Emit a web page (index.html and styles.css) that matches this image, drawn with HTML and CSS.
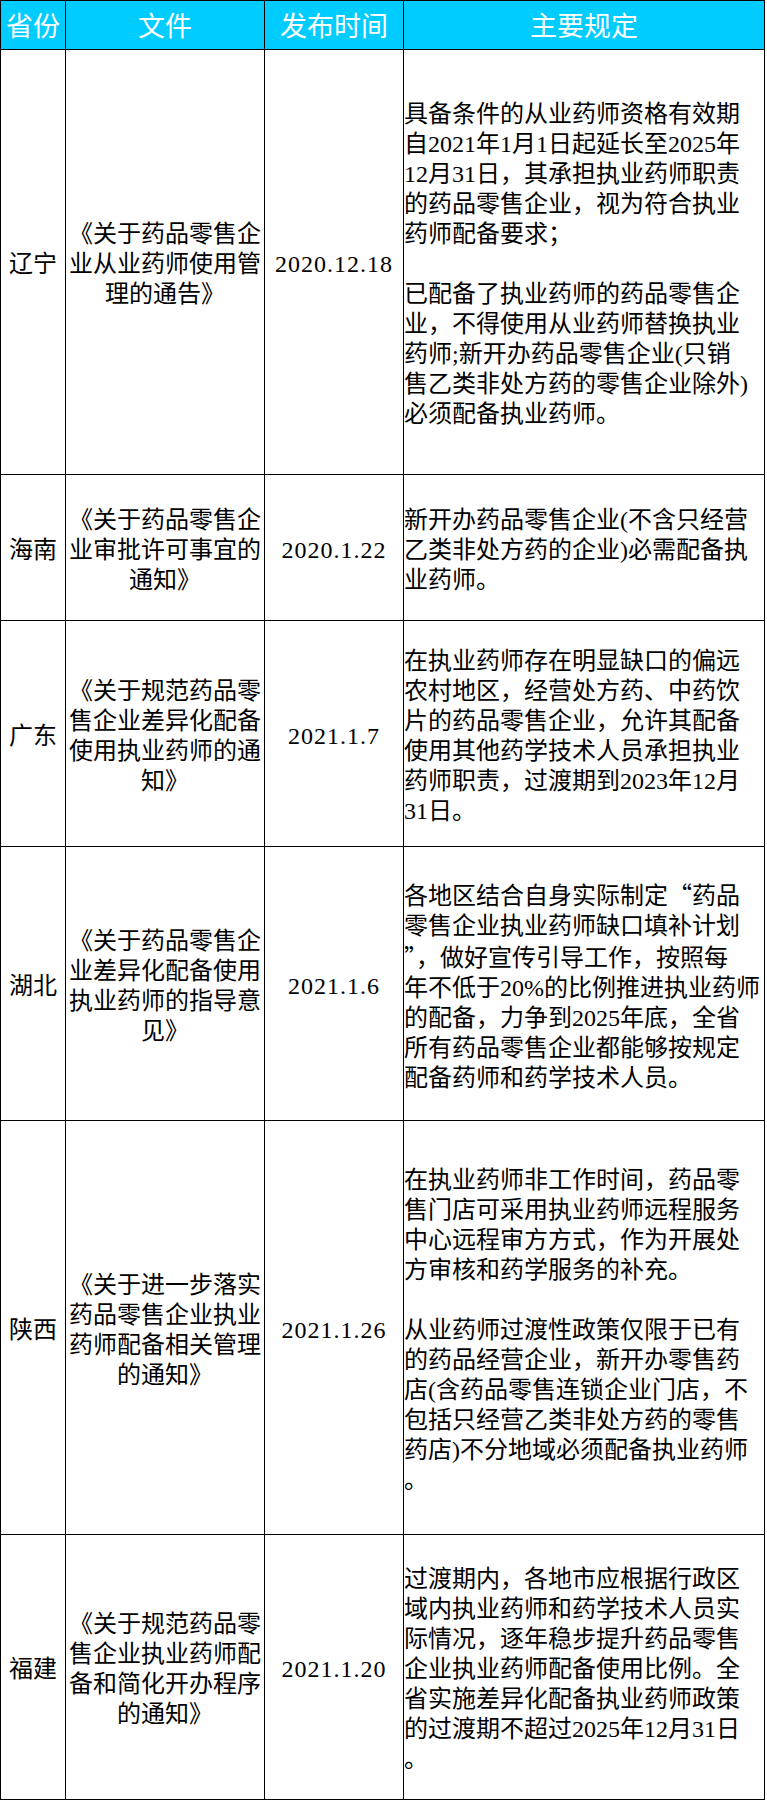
FILE: index.html
```html
<!DOCTYPE html>
<html lang="zh-CN">
<head>
<meta charset="utf-8">
<title>各省执业药师配备政策</title>
<link rel="stylesheet" href="styles.css">
</head>
<body>
<table class="policy">
  <colgroup>
    <col class="c-prov">
    <col class="c-doc">
    <col class="c-date">
    <col class="c-rule">
  </colgroup>
  <thead>
    <tr class="row-head">
      <th>省份</th>
      <th>文件</th>
      <th>发布时间</th>
      <th>主要规定</th>
    </tr>
  </thead>
  <tbody>
    <tr class="row-ln">
      <td class="prov">辽宁</td>
      <td class="doc">《关于药品零售企<br>业从业药师使用管<br>理的通告》</td>
      <td class="date">2020.12.18</td>
      <td class="rule rule-trail">
        <p>具备条件的从业药师资格有效期<br>自2021年1月1日起延长至2025年<br>12月31日，其承担执业药师职责<br>的药品零售企业，视为符合执业<br>药师配备要求；</p>
        <p>已配备了执业药师的药品零售企<br>业，不得使用从业药师替换执业<br>药师;新开办药品零售企业(只销<br>售乙类非处方药的零售企业除外)<br>必须配备执业药师。</p>
      </td>
    </tr>
    <tr class="row-hn">
      <td class="prov">海南</td>
      <td class="doc">《关于药品零售企<br>业审批许可事宜的<br>通知》</td>
      <td class="date">2020.1.22</td>
      <td class="rule"><p>新开办药品零售企业(不含只经营<br>乙类非处方药的企业)必需配备执<br>业药师。</p></td>
    </tr>
    <tr class="row-gd">
      <td class="prov">广东</td>
      <td class="doc">《关于规范药品零<br>售企业差异化配备<br>使用执业药师的通<br>知》</td>
      <td class="date">2021.1.7</td>
      <td class="rule"><p>在执业药师存在明显缺口的偏远<br>农村地区，经营处方药、中药饮<br>片的药品零售企业，允许其配备<br>使用其他药学技术人员承担执业<br>药师职责，过渡期到2023年12月<br>31日。</p></td>
    </tr>
    <tr class="row-hb">
      <td class="prov">湖北</td>
      <td class="doc">《关于药品零售企<br>业差异化配备使用<br>执业药师的指导意<br>见》</td>
      <td class="date">2021.1.6</td>
      <td class="rule"><p>各地区结合自身实际制定<span class="cjk">“</span>药品<br>零售企业执业药师缺口填补计划<br><span class="cjk">”</span>，做好宣传引导工作，按照每<br>年不低于20%的比例推进执业药师<br>的配备，力争到2025年底，全省<br>所有药品零售企业都能够按规定<br>配备药师和药学技术人员。</p></td>
    </tr>
    <tr class="row-sx">
      <td class="prov">陕西</td>
      <td class="doc">《关于进一步落实<br>药品零售企业执业<br>药师配备相关管理<br>的通知》</td>
      <td class="date">2021.1.26</td>
      <td class="rule">
        <p>在执业药师非工作时间，药品零<br>售门店可采用执业药师远程服务<br>中心远程审方方式，作为开展处<br>方审核和药学服务的补充。</p>
        <p>从业药师过渡性政策仅限于已有<br>的药品经营企业，新开办零售药<br>店(含药品零售连锁企业门店，不<br>包括只经营乙类非处方药的零售<br>药店)不分地域必须配备执业药师<br>。</p>
      </td>
    </tr>
    <tr class="row-fj">
      <td class="prov">福建</td>
      <td class="doc">《关于规范药品零<br>售企业执业药师配<br>备和简化开办程序<br>的通知》</td>
      <td class="date">2021.1.20</td>
      <td class="rule"><p>过渡期内，各地市应根据行政区<br>域内执业药师和药学技术人员实<br>际情况，逐年稳步提升药品零售<br>企业执业药师配备使用比例。全<br>省实施差异化配备执业药师政策<br>的过渡期不超过2025年12月31日<br>。</p></td>
    </tr>
  </tbody>
</table>
</body>
</html>
```

FILE: styles.css
```css
body {
  margin: 0;
  background: #ffffff;
}

.policy {
  border-collapse: collapse;
  table-layout: fixed;
  width: 764px;
  font-family: "Liberation Serif", "Noto Sans CJK SC", serif;
  font-size: 24px;
  line-height: 30px;
  color: #000000;
}

.c-prov { width: 65px; }
.c-doc { width: 199px; }
.c-date { width: 139px; }
.c-rule { width: 361px; }

.policy th,
.policy td {
  border: 1px solid #000000;
  padding: 4px 0 0 0;
  vertical-align: middle;
  white-space: nowrap;
}

.policy th {
  background: #00ccff;
  color: #ffffff;
  font-family: "Noto Sans CJK SC", sans-serif;
  font-size: 27px;
  font-weight: normal;
  line-height: 34px;
  padding: 0;
  text-align: center;
}

.row-head { height: 49px; }
.row-ln { height: 425px; }
.row-hn { height: 146px; }
.row-gd { height: 226px; }
.row-hb { height: 274px; }
.row-sx { height: 414px; }
.row-fj { height: 265px; }

.prov,
.doc,
.date {
  text-align: center;
}

.date {
  letter-spacing: 1px;
}

.rule {
  text-align: left;
  padding-left: 4px;
}

.rule p {
  margin: 0;
}

.rule p + p {
  margin-top: 30px;
}

.rule-trail {
  padding-bottom: 30px;
}

.cjk {
  font-family: "Noto Sans CJK SC", sans-serif;
}
```
